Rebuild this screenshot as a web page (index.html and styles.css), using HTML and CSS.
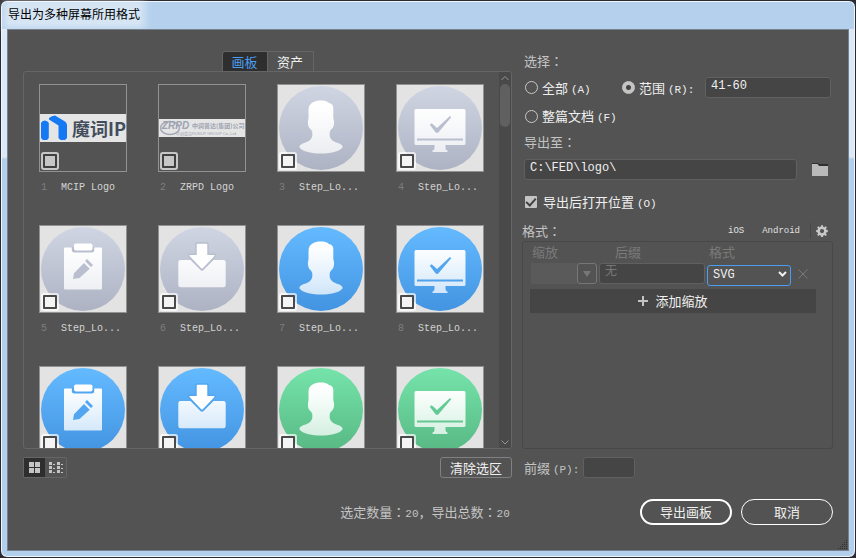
FILE: index.html
```html
<!DOCTYPE html>
<html lang="zh-CN">
<head>
<meta charset="utf-8">
<title>导出为多种屏幕所用格式</title>
<link rel="stylesheet" href="styles.css">
</head>
<body>
<svg class="defs" aria-hidden="true">
  <defs>
    <linearGradient id="g-gray" x1="0" y1="0" x2="0" y2="1"><stop offset="0" stop-color="#d0d5e3"/><stop offset="1" stop-color="#adb3c3"/></linearGradient>
    <linearGradient id="g-blue" x1="0" y1="0" x2="0" y2="1"><stop offset="0" stop-color="#64baff"/><stop offset="1" stop-color="#4394e1"/></linearGradient>
    <linearGradient id="g-green" x1="0" y1="0" x2="0" y2="1"><stop offset="0" stop-color="#75e4aa"/><stop offset="1" stop-color="#58b884"/></linearGradient>
    <linearGradient id="g-glyph" gradientUnits="userSpaceOnUse" x1="0" y1="20" x2="0" y2="68"><stop offset="0" stop-color="#fff"/><stop offset="1" stop-color="#fff" stop-opacity=".74"/></linearGradient>
    <symbol id="person" viewBox="0 0 86 86">
      <path fill="url(#g-glyph)" d="M43 15.500C36 15.500 30.500 18 30.500 25V33L30 36C29.500 40 31 43.500 33 44.500L34.300 47V51Q34 52.500 32.500 54.500C30 57.500 26 57.500 23 59.500C21 61 21 62.500 22.500 63.500C26 67 34 68.500 43 68.500S60 67 63.500 63.500C65 62.500 65 61 63 59.500C60 57.500 56 57.500 53.500 54.500Q52 52.500 51.700 51V47L53 44.500C55 43.500 56.500 40 56 36L55.300 33V23C55.300 20 53.500 18.500 51 18C49 16 46 15.500 43 15.500Z"/>
    </symbol>
    <symbol id="monitor" viewBox="0 0 86 86">
      <path fill="url(#g-glyph)" fill-rule="evenodd" d="M19 24H67Q68.500 24 68.500 25.500V58.500Q68.500 60 67 60H48.500V63Q48.500 65 50.500 65.500V67H35.500V65.500Q37.500 65 37.500 63V60H19Q17.500 60 17.500 58.500V25.500Q17.500 24 19 24ZM20 53.500V55.500H66V53.500Z"/>
      <path fill="currentColor" d="M32.800 39.800L34.600 38.200Q37 40 40 43L53 31L54.200 32.200L41.500 47.300Q40 48.500 38.500 47.300Z"/>
    </symbol>
    <symbol id="clipboard" viewBox="0 0 86 86">
      <rect x="24" y="21.500" width="38" height="42" rx="1" fill="url(#g-glyph)"/>
      <path fill="currentColor" d="M31.800 21H54.200V24Q54.200 26.500 51.700 26.500H34.300Q31.800 26.500 31.800 24Z"/>
      <rect x="34" y="17.500" width="18.500" height="7" rx="2" fill="#fff"/>
      <path fill="currentColor" d="M33 53L34 47.300L44 37L49.700 42.700L39.500 52ZM45 35L47 33L53 39L51 41Z"/>
    </symbol>
    <symbol id="inbox" viewBox="0 0 86 86">
      <path fill="url(#g-glyph)" d="M21.500 34H31.500L41 43.500Q43 46 45 43.500L54.500 34H64.500Q66.700 34 66.700 36.200V59Q66.700 61.300 64.500 61.300H21.500Q19.300 61.300 19.300 59V36.200Q19.300 34 21.500 34Z"/>
      <path fill="#fff" stroke="currentColor" stroke-width="3" paint-order="stroke" stroke-linejoin="round" d="M38.500 17.800H47.500Q48.300 17.800 48.300 18.600V29H55.300Q56 29.700 55 30.500L44 42Q43 43 42 42L31 30.500Q30 29.700 30.700 29H37.700V18.600Q37.700 17.800 38.500 17.800Z"/>
    </symbol>
  </defs>
</svg>

<div class="window">
  <header class="titlebar"><h1>导出为多种屏幕所用格式</h1></header>
  <form class="content">
    <div class="columns">
      <section class="left">
        <nav class="tabs">
          <button type="button" class="tab active">画板</button><button type="button" class="tab">资产</button>
        </nav>
        <div class="artboards">
          <ul class="grid">
            <li>
              <div class="thumb logo-thumb">
                <div class="mcip">
                  <svg width="28" height="28" viewBox="0 0 28 28" aria-hidden="true"><path fill="#1479f2" d="M1 9Q2 6.500 4.800 6.500T8.800 9V24L7 26H3L1 24ZM9 4Q12 1.500 15 1.500L25 7.500Q27 9 27 11V24L25 26H20.500L18.500 24V11.500L9 5.500Z"/></svg>
                  <span>魔词IP</span>
                </div>
                <input type="checkbox" class="pick dim" aria-label="MCIP Logo">
              </div>
              <p class="caption"><span class="num">1</span>MCIP Logo</p>
            </li>
            <li>
              <div class="thumb logo-thumb">
                <svg class="zrpd" width="86" height="18" viewBox="0 0 86 18">
                  <ellipse cx="11" cy="9" rx="9.500" ry="6.500" fill="none" stroke="#a3a9b8" stroke-width="1.500"/>
                  <text x="3" y="10" class="zrpd-mark">ZRPD</text>
                  <text x="17" y="17" class="zrpd-tiny">中润普达</text>
                  <text x="33" y="9" class="zrpd-name">中润普达(集团)公司</text>
                  <text x="33" y="16" class="zrpd-tiny">RUNUP GROUP Co.,Ltd.</text>
                </svg>
                <input type="checkbox" class="pick dim" aria-label="ZRPD Logo">
              </div>
              <p class="caption"><span class="num">2</span>ZRPD Logo</p>
            </li>
            <li>
              <div class="thumb gray"><svg viewBox="0 0 86 86"><circle cx="43" cy="43" r="42"/><use href="#person"/></svg><input type="checkbox" class="pick" aria-label="画板 3"></div>
              <p class="caption"><span class="num">3</span>Step_Lo...</p>
            </li>
            <li>
              <div class="thumb gray"><svg viewBox="0 0 86 86"><circle cx="43" cy="43" r="42"/><use href="#monitor"/></svg><input type="checkbox" class="pick" aria-label="画板 4"></div>
              <p class="caption"><span class="num">4</span>Step_Lo...</p>
            </li>
            <li>
              <div class="thumb gray"><svg viewBox="0 0 86 86"><circle cx="43" cy="43" r="42"/><use href="#clipboard"/></svg><input type="checkbox" class="pick" aria-label="画板 5"></div>
              <p class="caption"><span class="num">5</span>Step_Lo...</p>
            </li>
            <li>
              <div class="thumb gray"><svg viewBox="0 0 86 86"><circle cx="43" cy="43" r="42"/><use href="#inbox"/></svg><input type="checkbox" class="pick" aria-label="画板 6"></div>
              <p class="caption"><span class="num">6</span>Step_Lo...</p>
            </li>
            <li>
              <div class="thumb blue"><svg viewBox="0 0 86 86"><circle cx="43" cy="43" r="42"/><use href="#person"/></svg><input type="checkbox" class="pick" aria-label="画板 7"></div>
              <p class="caption"><span class="num">7</span>Step_Lo...</p>
            </li>
            <li>
              <div class="thumb blue"><svg viewBox="0 0 86 86"><circle cx="43" cy="43" r="42"/><use href="#monitor"/></svg><input type="checkbox" class="pick" aria-label="画板 8"></div>
              <p class="caption"><span class="num">8</span>Step_Lo...</p>
            </li>
            <li>
              <div class="thumb blue"><svg viewBox="0 0 86 86"><circle cx="43" cy="43" r="42"/><use href="#clipboard"/></svg><input type="checkbox" class="pick" aria-label="画板 9"></div>
            </li>
            <li>
              <div class="thumb blue"><svg viewBox="0 0 86 86"><circle cx="43" cy="43" r="42"/><use href="#inbox"/></svg><input type="checkbox" class="pick" aria-label="画板 10"></div>
            </li>
            <li>
              <div class="thumb green"><svg viewBox="0 0 86 86"><circle cx="43" cy="43" r="42"/><use href="#person"/></svg><input type="checkbox" class="pick" aria-label="画板 11"></div>
            </li>
            <li>
              <div class="thumb green"><svg viewBox="0 0 86 86"><circle cx="43" cy="43" r="42"/><use href="#monitor"/></svg><input type="checkbox" class="pick" aria-label="画板 12"></div>
            </li>
          </ul>
          <div class="scrollbar">
            <svg width="12" height="12" viewBox="0 0 12 12"><path d="M2.500 8L6 4.500L9.500 8"/></svg>
            <div class="track"><div class="handle"></div></div>
            <svg width="12" height="12" viewBox="0 0 12 12"><path d="M2.500 4.500L6 8L9.500 4.500"/></svg>
          </div>
        </div>
        <div class="toolbar">
          <div class="views">
            <button type="button" class="view active" aria-label="缩览图视图"><svg width="11" height="11" viewBox="0 0 11 11"><path d="M0 0h5v5H0zM6 0h5v5H6zM0 6h5v5H0zM6 6h5v5H6z"/></svg></button><button type="button" class="view" aria-label="列表视图"><svg width="14" height="11" viewBox="0 0 14 11"><path d="M0 0h3v3H0zM4 2h2v1H4zM8 0h3v3H8zM12 2h2v1h-2zM0 4h3v3H0zM4 6h2v1H4zM8 4h3v3H8zM12 6h2v1h-2zM0 8h3v3H0zM4 10h2v1H4zM8 8h3v3H8zM12 10h2v1h-2z"/></svg></button>
          </div>
          <button type="button" class="clear">清除选区</button>
        </div>
      </section>

      <section class="right">
        <div class="heading">选择<span class="colon" lang="zh-TW">：</span></div>
        <div class="range-row">
          <label class="option all"><input type="radio" name="scope"><span>全部 <span class="lat">(A)</span></span></label>
          <label class="option"><input type="radio" name="scope" checked><span>范围 <span class="lat">(R):</span></span></label>
          <input type="text" class="field range" value="41-60" aria-label="范围">
        </div>
        <div class="doc-row">
          <label class="option"><input type="radio" name="scope"><span>整篇文档 <span class="lat">(F)</span></span></label>
        </div>
        <label class="heading export-to" for="path">导出至<span class="colon" lang="zh-TW">：</span></label>
        <div class="path-row">
          <input type="text" id="path" class="field" value="C:\FED\logo\">
          <button type="button" class="icon-button" aria-label="选择文件夹">
            <svg width="16" height="14" viewBox="0 0 16 14"><path fill="#303030" d="M0 0h6l1 1h9v3H0z"/><path fill="#bababa" d="M0 1h5.500L7 3h9v10H0z"/></svg>
          </button>
        </div>
        <label class="option open-row"><input type="checkbox" checked><span>导出后打开位置 <span class="lat">(O)</span></span></label>
        <div class="format-head">
          <span>格式<span class="colon" lang="zh-TW">：</span></span>
          <button type="button" class="preset">iOS</button>
          <button type="button" class="preset">Android</button>
          <button type="button" class="icon-button gear" aria-label="高级设置">
            <svg width="12" height="12" viewBox="0 0 12 12"><path fill="#c8c8c8" fill-rule="evenodd" d="M5 .3h2l.3 1.600 1 .4L9.700 1.200l1.200 1.200-1 1.400.4 1 1.500.3v2l-1.500.3-.4 1 1 1.400-1.200 1.200-1.400-1-1 .4L7 11.900H5l-.3-1.500-1-.4-1.400 1-1.200-1.200 1-1.400-.4-1L.2 7.100v-2l1.500-.3.4-1-1-1.400 1.200-1.200 1.400 1 1-.4zM6 4a2.100 2.100 0 1 0 0 4.200A2.100 2.100 0 1 0 6 4z"/></svg>
          </button>
        </div>
        <div class="formats">
          <div class="scale-grid">
            <label for="scale">缩放</label>
            <label for="suffix" class="suffix-label">后缀</label>
            <label for="format">格式</label>
            <span></span>
            <div class="combo">
              <input type="text" id="scale" disabled>
              <button type="button" disabled aria-label="缩放选项"><svg width="8" height="6" viewBox="0 0 8 6"><path fill="#777" d="M0 0h8L4 6z"/></svg></button>
            </div>
            <input type="text" id="suffix" class="field" placeholder="无">
            <div class="select">
              <select id="format"><option>SVG</option></select>
              <svg width="9" height="6" viewBox="0 0 9 6"><path d="M1 1L4.500 4.500L8 1"/></svg>
            </div>
            <button type="button" class="icon-button remove" aria-label="移除"><svg width="10" height="10" viewBox="0 0 10 10"><path d="M.5 .5L9.500 9.500M9.500 .5L.5 9.500"/></svg></button>
          </div>
          <button type="button" class="add"><svg width="10" height="10" viewBox="0 0 10 10"><path d="M4 0h2v4h4v2H6v4H4V6H0V4h4z"/></svg>添加缩放</button>
        </div>
        <div class="prefix-row">
          <label for="prefix">前缀 <span class="lat">(P):</span></label>
          <input type="text" id="prefix" class="field">
        </div>
      </section>
    </div>

    <footer class="footer">
      <p class="status">选定数量<span class="colon" lang="zh-TW">：</span><span class="lat">20</span>，导出总数<span class="colon" lang="zh-TW">：</span><span class="lat">20</span></p>
      <div class="actions">
        <button type="submit" class="pill primary">导出画板</button>
        <button type="button" class="pill">取消</button>
      </div>
    </footer>
    <svg class="grip" width="9" height="9" viewBox="0 0 9 9" aria-hidden="true"><path fill="#303030" d="M8 0h1v1H8zM6 2h1v1H6zM8 2h1v1H8zM4 4h1v1H4zM6 4h1v1H6zM8 4h1v1H8zM2 6h1v1H2zM4 6h1v1H4zM6 6h1v1H6zM8 6h1v1H8zM0 8h1v1H0zM2 8h1v1H2zM4 8h1v1H4zM6 8h1v1H6zM8 8h1v1H8z"/></svg>
  </form>
</div>
</body>
</html>
```
FILE: styles.css
```css
* { box-sizing: border-box; }

:root {
  --cjk: "Noto Sans CJK SC", sans-serif;
  --mono: "Liberation Mono", "Noto Sans CJK SC", monospace;
  --panel: #535353;
  --line: #656565;
  --field: #454545;
  --text: #c4c4c4;
}

body {
  margin: 0;
  background: #2b2a30;
  font: 13px/20px var(--cjk);
  color: #f0f0f0;
}

button, input, select {
  margin: 0;
  padding: 0;
  border: 0;
  font: inherit;
  color: inherit;
  background: none;
  appearance: none;
  outline: 0;
  min-width: 0;
}

svg { display: block; }
p, ul, h1 { margin: 0; padding: 0; }
.defs { position: absolute; width: 0; height: 0; }

/* Window frame */
.window {
  display: flex;
  flex-direction: column;
  height: 100vh;
  padding: 0 6px 6px;
  border: 1px solid #2b2a30;
  border-radius: 7px;
  background: linear-gradient(#b4d0ec 28px, #dbe8f7 28px, #dbe8f7 156px, #b2cfec 158px);
  box-shadow: inset 0 0 0 1px #eef6fd;
}

.titlebar { height: 28px; padding: 3px 1px; }
.titlebar h1 {
  display: inline-block;
  font-size: 12px;
  font-weight: 400;
  line-height: 20px;
  color: #000;
  background: rgba(255, 255, 255, .45);
  box-shadow: 0 0 8px 5px rgba(255, 255, 255, .45);
}

.content {
  position: relative;
  flex: 1;
  min-height: 0;
  display: flex;
  flex-direction: column;
  gap: 21px;
  padding: 21px 15px 25px;
  border: 1px solid #75828e;
  background: var(--panel);
}

.columns {
  flex: 1;
  min-height: 0;
  display: grid;
  grid-template-columns: minmax(0, 489fr) minmax(0, 311fr);
  gap: 10px;
}

.left, .right { display: flex; flex-direction: column; min-height: 0; }

/* Artboard list */
.tabs { display: flex; justify-content: center; }
.tab {
  width: 46px;
  height: 20px;
  line-height: 19px;
  border: 1px solid var(--line);
  border-width: 1px 1px 0 0;
}
.tab.active { background: #2e2e2e; color: #4a9df0; border-left-width: 1px; border-radius: 3px 0 0; }

.artboards {
  flex: 1;
  min-height: 0;
  display: flex;
  border: 1px solid var(--line);
  border-radius: 3px;
  overflow: hidden;
}

.grid {
  flex: 1;
  display: grid;
  grid-template-columns: repeat(auto-fill, 88px);
  grid-auto-rows: 110px;
  gap: 31px;
  padding: 12px 0 0 15px;
  list-style: none;
  overflow: hidden;
}

.thumb {
  position: relative;
  height: 88px;
  border: 1px solid #929292;
  background: #e3e3e3;
}
.thumb.logo-thumb { display: flex; flex-direction: column; justify-content: center; background: none; }
.gray { color: #b9bfcf; }
.blue { color: #52a6f0; }
.green { color: #64ca95; }
.gray circle { fill: url(#g-gray); }
.blue circle { fill: url(#g-blue); }
.green circle { fill: url(#g-green); }

.mcip {
  display: flex;
  align-items: center;
  gap: 4px;
  height: 28px;
  overflow: hidden;
  background: #e5e5e5;
  color: #434d5b;
  font-size: 18px;
  font-weight: 700;
  white-space: nowrap;
}
.mcip svg { flex: none; }
.zrpd { background: #e5e5e5; }
.zrpd text { fill: #9da3b1; font-family: var(--cjk); }
.zrpd .zrpd-mark { font: italic bold 10px "Liberation Sans", sans-serif; }
.zrpd .zrpd-name { font-size: 6px; font-weight: 700; }
.zrpd .zrpd-tiny { font-size: 4px; font-family: "Liberation Sans", "Noto Sans CJK SC", sans-serif; }

.pick {
  position: absolute;
  left: 3px;
  bottom: 3px;
  width: 14px;
  height: 14px;
  border: 2px solid #4a4a4a;
  border-radius: 1px;
  background: #f4f4f4;
  box-shadow: 0 0 0 2px rgba(255, 255, 255, .7);
}
.pick.dim { background: #c6c6c6; border-color: #404040; box-shadow: 0 0 0 2px #c6c6c6; }

.caption {
  display: flex;
  padding: 6px 0 0 2px;
  font: 10px/20px var(--mono);
  color: #d4d4d4;
}
.num { width: 20px; color: #7e7e7e; }

.scrollbar { display: flex; flex-direction: column; width: 12px; background: #494949; }
.scrollbar path { fill: none; stroke: #969696; stroke-width: 1px; }
.track { flex: 1; }
.handle { height: 43px; margin: 0 1px; border-radius: 5px; background: #606060; }

.toolbar { display: flex; justify-content: space-between; margin-top: 8px; height: 21px; }
.views { display: flex; border: 1px solid var(--line); border-radius: 2px; }
.view { display: flex; align-items: center; justify-content: center; width: 21px; }
.view path { fill: #c4c4c4; }
.view.active { background: #2e2e2e; }
.clear { width: 72px; border: 1px solid #808080; border-radius: 3px; line-height: 19px; }

/* Export options */
.heading, .format-head, .prefix-row, .status { color: var(--text); }
.heading { padding-left: 2px; }
.colon { font-family: "Noto Sans CJK TC", sans-serif; }
.lat { font: 11px/1 var(--mono); }

.field {
  height: 21px;
  padding: 0 5px 3px;
  border: 1px solid #606060;
  border-radius: 3px;
  background: var(--field);
  font: 12px/17px var(--mono);
}
.field::placeholder { color: #777; opacity: 1; }

.option { display: flex; align-items: center; gap: 4px; white-space: nowrap; }
.option input[type="radio"] {
  width: 13px;
  height: 13px;
  border: 1px solid #c8c8c8;
  border-radius: 50%;
}
.option input[type="radio"]:checked { background: radial-gradient(circle, #444 2px, #c4c4c4 3px); }
.option input[type="checkbox"] {
  width: 12px;
  height: 12px;
  border-radius: 1px;
  background: #c4c4c4;
  display: grid;
  place-items: center;
}
.option input[type="checkbox"]::before {
  content: "";
  width: 4px;
  height: 8px;
  margin-bottom: 2px;
  border: solid #424242;
  border-width: 0 2px 2px 0;
  transform: rotate(42deg);
}

.range-row, .path-row, .prefix-row { display: flex; align-items: center; height: 21px; }
.range-row { margin-top: 6px; padding: 0 2px 0 3px; }
.range-row .all { width: 97px; }
.range-row .range { width: 126px; margin-left: auto; }
.doc-row { margin-top: 8px; padding-left: 3px; }
.export-to { margin-top: 6px; }
.path-row { margin-top: 7px; padding: 0 5px 0 2px; gap: 15px; }
.path-row .field { flex: 1; }
.open-row { margin-top: 12px; padding-left: 3px; gap: 6px; }
.icon-button { display: grid; place-items: center; }

.format-head { display: flex; align-items: center; margin-top: 8px; height: 21px; }
.format-head > span { flex: 1; }
.preset { margin-right: 18px; font: 9px/20px var(--mono); color: #e0e0e0; }
.preset + .gear { margin-left: -8px; padding: 0 5px; height: 15px; border-left: 1px solid #474747; }

.formats {
  flex: 1;
  min-height: 0;
  padding: 0 16px 0 7px;
  border: 1px solid #484848;
  border-radius: 3px;
}
.scale-grid {
  display: grid;
  grid-template-columns: 67px minmax(0, 1fr) 84px 20px;
  grid-template-rows: 20px 21px;
  column-gap: 2px;
  row-gap: 1px;
  padding-right: 3px;
}
.scale-grid label { padding-left: 2px; color: #7a7a7a; }
.scale-grid .suffix-label { padding-left: 16px; }
.combo { display: flex; padding-left: 1px; }
.combo input { flex: 1; background: #5a5a5a; }
.combo button { display: grid; place-items: center; width: 20px; border: 1px solid #777; border-radius: 3px; }
.select { position: relative; }
.select select {
  width: 100%;
  height: 21px;
  padding: 0 5px;
  border: 1px solid #4a9df0;
  border-radius: 3px;
  font: 12px/19px var(--mono);
}
.select svg { position: absolute; right: 4px; top: 8px; pointer-events: none; }
.select path { fill: none; stroke: #f0f0f0; stroke-width: 2px; }
.remove path { stroke: #7a7a7a; }

.add {
  display: flex;
  align-items: center;
  justify-content: center;
  gap: 7px;
  width: 100%;
  height: 24px;
  margin-top: 5px;
  background: var(--field);
}
.add path { fill: #c4c4c4; }

.prefix-row { margin-top: 8px; padding-left: 2px; gap: 4px; }
.prefix-row .field { width: 52px; }

/* Footer */
.footer { display: grid; grid-template-columns: 1fr auto 1fr; align-items: center; }
.status { grid-column: 2; padding-right: 6px; }
.actions { display: flex; justify-content: flex-end; gap: 9px; }
.pill { width: 92px; height: 26px; border: 1px solid #fff; border-radius: 13px; line-height: 22px; }
.pill.primary { border-width: 2px; }
.grip { position: absolute; right: 1px; bottom: 1px; }
```
